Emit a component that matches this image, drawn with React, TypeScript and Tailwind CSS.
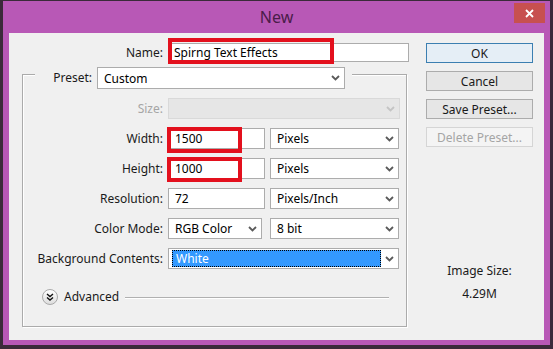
import React from 'react';

const font = { fontFamily: '"Noto Sans", "Open Sans", sans-serif' };

const Chevron = ({ color = '#5a5a5a' }: { color?: string }) => (
  <svg width="9" height="6" viewBox="0 0 9 6" className="shrink-0">
    <polyline points="1,1 4.5,4.5 8,1" fill="none" stroke={color} strokeWidth="1.8" />
  </svg>
);

const Select = ({
  value,
  width,
  height = 'h-[21px]',
  disabled = false,
}: {
  value?: string;
  width: string;
  height?: string;
  disabled?: boolean;
}) => (
  <div
    className={`${width} ${height} flex items-center justify-between border pl-[6px] pr-[4px] ${
      disabled ? 'border-[#d9d9d9] bg-[#e6e6e6]' : 'border-[#acacac] bg-white'
    }`}
  >
    <span className="whitespace-nowrap leading-[15px]">{value}</span>
    <Chevron color={disabled ? '#c4c4c4' : '#5a5a5a'} />
  </div>
);

const Input = ({ value, width }: { value: string; width: string }) => (
  <div className={`${width} h-[21px] flex items-center border border-[#acacac] bg-white pl-[6px]`}>
    <span className="leading-[15px]">{value}</span>
  </div>
);

const Row = ({ label, muted, children }: { label: string; muted?: boolean; children: React.ReactNode }) => (
  <div className="flex h-[21px] items-center">
    <div className={`w-[140px] whitespace-nowrap text-right ${muted ? 'text-[#a5a5a5]' : 'text-[#1a1a1a]'}`}>
      {label}
    </div>
    <div className="ml-[5px] flex items-center">{children}</div>
  </div>
);

const Button = ({ label, primary, disabled }: { label: string; primary?: boolean; disabled?: boolean }) => (
  <div
    className={`flex h-[20px] w-[107px] items-center justify-center border leading-[15px] ${
      primary
        ? 'border-[#3c7fb1] bg-[#e5eef6] text-[#1a1a1a]'
        : disabled
          ? 'border-[#d5d5d5] bg-[#f4f4f4] text-[#a5a5a5]'
          : 'border-[#acacac] bg-[#e6e6e6] text-[#1a1a1a]'
    }`}
  >
    {label}
  </div>
);

// red annotation rectangles drawn over the fields
const RedBox = ({ className }: { className: string }) => (
  <div className={`pointer-events-none absolute border-[4px] border-[#e3101d] ${className}`} />
);

export default function App() {
  return (
    <div
      className="flex h-[349px] w-[553px] flex-col border-x-[3px] border-t border-b-[4px] border-[#3b2a3a] bg-[#b858b6] text-[12px]"
      style={font}
    >
      {/* Title bar */}
      <div className="relative flex h-[32px] shrink-0 items-center justify-center">
        <span className="text-[16px] text-[#4a1c49]">New</span>
        <div className="absolute right-[5px] top-[2px] flex h-[20px] w-[31px] items-center justify-center bg-[#c75050]">
          <svg width="9" height="9" viewBox="0 0 9 9">
            <path d="M1 1 L8 8 M8 1 L1 8" stroke="#fff" strokeWidth="1.8" />
          </svg>
        </div>
      </div>

      {/* Dialog body */}
      <div className="mx-[6px] flex h-[307px] shrink-0 bg-[#f0f0f0] pt-[10px]">
        {/* Left: form */}
        <div className="w-[400px]">
          <div className="flex h-[19px] items-center">
            <div className="w-[154px] text-right text-[#1a1a1a]">Name:</div>
            <div className="relative ml-[5px] flex h-[19px] w-[241px] items-center border border-[#acacac] bg-white pl-[5px]">
              <span className="leading-[15px]">Spirng Text Effects</span>
              <RedBox className="left-[-1px] top-[-6px] h-[26px] w-[166px]" />
            </div>
          </div>

          {/* Group box */}
          <div className="ml-[13px] mt-[12px] h-[253px] w-[385px] border border-[#ababab] shadow-[inset_1px_1px_0_#fff,1px_1px_0_#fff]">
            <div className="-mt-[8px] ml-[12px] flex h-[22px] w-fit items-center bg-[#f0f0f0] pr-[7px]">
              <div className="w-[57px] text-right text-[#1a1a1a]">Preset:</div>
              <div className="ml-[5px]">
                <Select value="Custom" width="w-[248px]" height="h-[22px]" />
              </div>
            </div>

            <div className="mt-[9px] flex flex-col gap-[9px]">
              <Row label="Size:" muted>
                <Select width="w-[232px]" disabled />
              </Row>
              <Row label="Width:">
                <div className="relative">
                  <Input value="1500" width="w-[97px]" />
                  <RedBox className="left-[-1px] top-[-1px] h-[26px] w-[75px]" />
                </div>
                <div className="ml-[5px]">
                  <Select value="Pixels" width="w-[129px]" />
                </div>
              </Row>
              <Row label="Height:">
                <div className="relative">
                  <Input value="1000" width="w-[97px]" />
                  <RedBox className="left-[-1px] top-[-1px] h-[25px] w-[75px]" />
                </div>
                <div className="ml-[5px]">
                  <Select value="Pixels" width="w-[129px]" />
                </div>
              </Row>
              <Row label="Resolution:">
                <Input value="72" width="w-[97px]" />
                <div className="ml-[5px]">
                  <Select value="Pixels/Inch" width="w-[129px]" />
                </div>
              </Row>
              <Row label="Color Mode:">
                <Select value="RGB Color" width="w-[94px]" />
                <div className="ml-[8px]">
                  <Select value="8 bit" width="w-[129px]" />
                </div>
              </Row>
              <Row label="Background Contents:">
                <div className="flex h-[21px] w-[231px] items-center justify-between border border-[#acacac] bg-white pl-[3px] pr-[4px]">
                  <div className="flex h-[17px] w-[209px] items-center border border-dotted border-black bg-[#3399ff] pl-[3px] text-white">
                    <span className="leading-[15px]">White</span>
                  </div>
                  <Chevron />
                </div>
              </Row>
            </div>

            {/* Advanced */}
            <div className="ml-[19px] mr-[17px] mt-[20px] flex h-[16px] items-center">
              <svg width="16" height="16" viewBox="0 0 16 16" className="shrink-0">
                <defs>
                  <linearGradient id="adv" x1="0" y1="0" x2="0" y2="1">
                    <stop offset="0" stopColor="#ffffff" />
                    <stop offset="1" stopColor="#dcdcdc" />
                  </linearGradient>
                </defs>
                <circle cx="8" cy="8" r="7.5" fill="url(#adv)" stroke="#a9a9a9" />
                <polyline points="5,5 8,7.5 11,5" fill="none" stroke="#111" strokeWidth="1.4" />
                <polyline points="5,8.5 8,11 11,8.5" fill="none" stroke="#111" strokeWidth="1.4" />
              </svg>
              <span className="ml-[6px] text-[#1a1a1a]">Advanced</span>
              <div className="ml-[6px] h-px flex-1 bg-[#b0b0b0] shadow-[0_1px_0_#fff]" />
            </div>
          </div>
        </div>

        {/* Right: buttons */}
        <div className="ml-[17px] flex w-[107px] flex-col">
          <div className="flex flex-col gap-[8px]">
            <Button label="OK" primary />
            <Button label="Cancel" />
            <Button label="Save Preset..." />
            <Button label="Delete Preset..." disabled />
          </div>
          <div className="mt-[117px] flex flex-col items-center gap-[9px] text-[#1a1a1a]">
            <span className="leading-[14px]">Image Size:</span>
            <span className="leading-[14px]">4.29M</span>
          </div>
        </div>
      </div>
    </div>
  );
}
